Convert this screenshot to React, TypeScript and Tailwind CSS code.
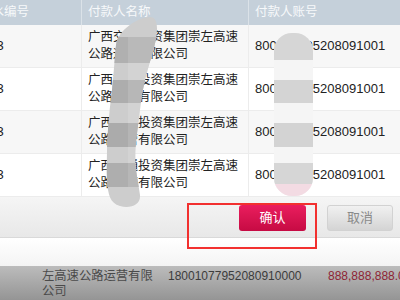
import React from 'react';

const rows = [
  { no: '003', name: ['广西交通投资集团崇左高速', '公路运营有限公司'], acct: '800107795208091001', bg: 'bg-[#f7f7f7]' },
  { no: '003', name: ['广西交通投资集团崇左高速', '公路运营有限公司'], acct: '800107795208091001', bg: 'bg-white' },
  { no: '003', name: ['广西交通投资集团崇左高速', '公路运营有限公司'], acct: '800107795208091001', bg: 'bg-[#f7f7f7]' },
  { no: '003', name: ['广西交通投资集团崇左高速', '公路运营有限公司'], acct: '800107795208091001', bg: 'bg-white' },
];

// privacy brush strokes drawn over the table
const Smudge: React.FC = () => (
  <svg className="absolute left-0 top-0 pointer-events-none" width="400" height="300" viewBox="0 0 400 300">
    <defs>
      <clipPath id="leftStroke">
        <path d="M116 45 C118 30 138 17 150 17 C160 17 158 35 152 55 C146 75 142 90 140 110 C137 135 134 150 136 170 L140 195 C141 205 130 209 120 206 C110 203 108 195 107 180 C106 150 108 120 112 90 C114 70 115 55 116 45 Z" />
      </clipPath>
      <clipPath id="rightStroke">
        <rect x="274" y="33" width="39" height="163" rx="18" />
      </clipPath>
    </defs>
    <g clipPath="url(#leftStroke)">
      <rect x="100" y="10" width="70" height="200" fill="#cdcdcd" />
      <rect x="100" y="37" width="70" height="26" fill="#b0b0b0" />
      <rect x="100" y="80" width="70" height="23" fill="#adadad" />
      <rect x="100" y="123" width="70" height="24" fill="#ababab" />
      <rect x="100" y="163" width="70" height="24" fill="#aeaeae" />
      <rect x="128" y="37" width="40" height="150" fill="#ffffff" opacity="0.12" />
    </g>
    <g clipPath="url(#rightStroke)">
      <rect x="270" y="30" width="50" height="170" fill="#f5f5f5" />
      <rect x="270" y="30" width="50" height="30" fill="#d6d6d6" />
      <rect x="270" y="80" width="50" height="23" fill="#d4d4d4" />
      <rect x="270" y="123" width="50" height="24" fill="#d3d3d3" />
      <rect x="270" y="163" width="50" height="21" fill="#d6d6d6" />
      <rect x="270" y="184" width="50" height="16" fill="#f3dbe3" />
    </g>
  </svg>
);

export default function App() {
  return (
    <div
      className="relative w-[400px] h-[300px] overflow-hidden bg-white text-[#222]"
      style={{ fontFamily: '"Liberation Sans", "Noto Sans CJK SC", sans-serif' }}
    >
      <div className="-ml-[27px] w-[427px]">
        {/* header */}
        <div className="flex h-[25px] bg-[#c5d0da] text-[12.5px] text-[#f7f9fb]">
          <div className="w-[109px] pl-[6px] flex items-center border-r border-[#dbe2e8]">流水编号</div>
          <div className="w-[167px] pl-[6px] flex items-center border-r border-[#dbe2e8]">付款人名称</div>
          <div className="flex-1 pl-[6px] flex items-center">付款人账号</div>
        </div>
        {rows.map((r, i) => (
          <div key={i} className={`flex h-[43px] border-b border-[#ececec] ${r.bg}`}>
            <div className="w-[109px] pl-[9px] flex items-center text-[13px] border-r border-[#ececec]">{r.no}</div>
            <div className="w-[167px] pl-[6px] flex flex-col justify-center text-[12.5px] leading-[17px] border-r border-[#ececec]">
              <span>{r.name[0]}</span>
              <span>{r.name[1]}</span>
            </div>
            <div className="flex-1 pl-[6px] flex items-center text-[13px]">{r.acct}</div>
          </div>
        ))}
      </div>

      {/* dialog footer */}
      <div className="h-[41px] flex justify-end gap-[21px] pr-[7px] pt-[8px] bg-gradient-to-b from-[#f5f5f5] to-[#e8e8e8] border-b border-[#d9d9d9]">
        <button className="w-[67px] h-[26px] rounded-[3px] bg-gradient-to-b from-[#ea1d5e] to-[#c60a43] text-white text-[13px]">
          确认
        </button>
        <button className="w-[66px] h-[26px] rounded-[3px] border border-[#d2d2d2] bg-gradient-to-b from-[#f1f1f1] to-[#d4d4d4] text-[#8a8a8a] text-[13px]">
          取消
        </button>
      </div>
      <div className="h-[28px] bg-gradient-to-b from-white to-[#f4f4f4]" />

      {/* page behind the mask */}
      <div className="h-[40px] flex pt-[3px] bg-gradient-to-b from-[#bcbcbc] to-[#8e8e8e] text-[12px]">
        <div className="w-[156px] shrink-0 pl-[42px] leading-[15px] text-[#4a4a4a] text-[12.3px]">
          左高速公路运营有限
          <br />
          公司
        </div>
        <div className="w-[160px] shrink-0 ml-[12px] text-[#3c3c3c] leading-[15px]">18001077952080910000</div>
        <div className="flex-1 text-[#8e2535] leading-[15px] whitespace-nowrap">888,888,888.00</div>
      </div>

      <Smudge />

      {/* annotation box */}
      <div className="absolute left-[187px] top-[203px] w-[130px] h-[46px] border-2 border-[#f2302f]" />
    </div>
  );
}
